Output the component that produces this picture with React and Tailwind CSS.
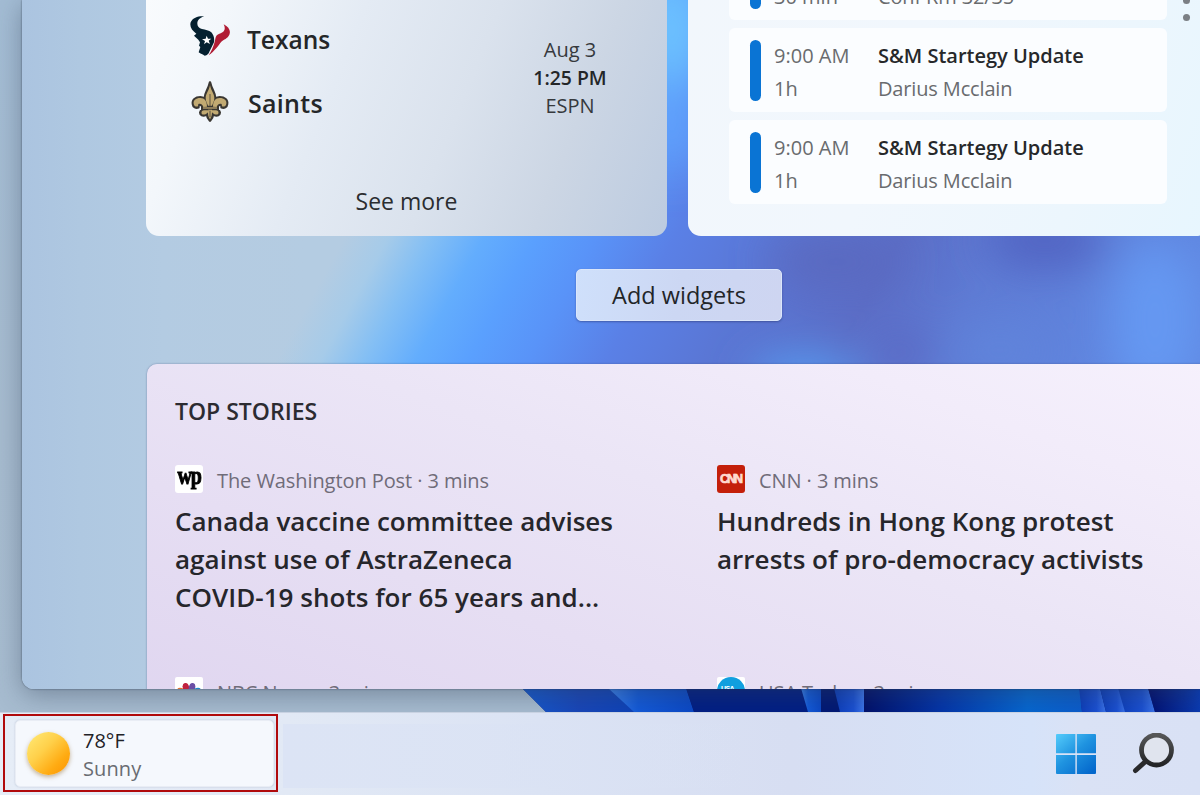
const events = [
  { time: "8:30 AM", length: "30 min", title: "Portfolio Work Update", place: "Conf Rm 32/35" },
  { time: "9:00 AM", length: "1h", title: "S&M Startegy Update", place: "Darius Mcclain" },
  { time: "9:00 AM", length: "1h", title: "S&M Startegy Update", place: "Darius Mcclain" },
];

const stories = [
  {
    source: "The Washington Post",
    logo: "wp",
    lines: ["Canada vaccine committee advises", "against use of AstraZeneca", "COVID-19 shots for 65 years and..."],
  },
  {
    source: "CNN",
    logo: "cnn",
    lines: ["Hundreds in Hong Kong protest", "arrests of pro-democracy activists"],
  },
  { source: "NBC News", logo: "nbc", lines: [] },
  { source: "USA Today", logo: "usa", lines: [] },
];

const PanelBackdrop = () => (
  <svg className="absolute inset-0 w-full h-full" viewBox="22 0 1178 689" preserveAspectRatio="none" aria-hidden="true">
    <defs>
      <linearGradient id="flow" gradientUnits="userSpaceOnUse" x1="310" y1="300" x2="977" y2="667">
        <stop offset="0" stopColor="#b4cce2" />
        <stop offset="0.05" stopColor="#a6cbe9" />
        <stop offset="0.1" stopColor="#84bff4" />
        <stop offset="0.16" stopColor="#63adfd" />
        <stop offset="0.22" stopColor="#5aa0fe" />
        <stop offset="0.29" stopColor="#5993f8" />
        <stop offset="0.38" stopColor="#5a80e6" />
        <stop offset="0.5" stopColor="#5a76d4" />
        <stop offset="0.64" stopColor="#5b6dc6" />
        <stop offset="0.76" stopColor="#5e7bd4" />
        <stop offset="1" stopColor="#6088e2" />
      </linearGradient>
      <linearGradient id="haze" x1="0" y1="0" x2="1" y2="0">
        <stop offset="0" stopColor="#abc4e0" />
        <stop offset="0.05" stopColor="#afc8e1" />
        <stop offset="0.12" stopColor="#b3cbe2" />
        <stop offset="0.24" stopColor="#b5cbe0" stopOpacity="0" />
      </linearGradient>
      <filter id="soft" x="-60%" y="-60%" width="220%" height="220%">
        <feGaussianBlur stdDeviation="22" />
      </filter>
    </defs>
    <rect x="22" width="1178" height="689" fill="url(#flow)" />
    <rect x="22" width="1178" height="689" fill="url(#haze)" />
    <g filter="url(#soft)">
      <ellipse cx="836" cy="262" rx="66" ry="28" fill="#5a69c0" />
      <ellipse cx="1045" cy="240" rx="60" ry="30" fill="#5164c2" />
      <ellipse cx="900" cy="352" rx="32" ry="22" fill="#5a69c4" />
      <ellipse cx="805" cy="376" rx="56" ry="22" fill="#569cf2" />
      <ellipse cx="1000" cy="350" rx="46" ry="22" fill="#6085dc" />
      <ellipse cx="1155" cy="320" rx="44" ry="80" fill="#6598f2" />
      <ellipse cx="672" cy="30" rx="30" ry="60" fill="#6ec6ff" />
      <ellipse cx="672" cy="130" rx="20" ry="40" fill="#62a8ff" />
    </g>
  </svg>
);

const TexansLogo = () => (
  <svg className="w-[40px] h-[40px]" viewBox="0 0 120 120">
    <path
      fill="#04202f"
      d="M43 1C28-1 8 4 2 19c-4 13 4 25 17 34l-7 6 13 12 5 8-3 10 4 4-5 16c5 4 13 6 18 10 8-2 12-6 14-12l14-28c2-12-1-22-8-30C57 43 46 41 36 39 27 36 22 30 22 23 22 12 30 5 43 1Z"
    />
    <path
      fill="#b01c34"
      d="M101 25c16 8 22 20 17 31-5 12-17 14-24 21-8 10-20 28-38 41 8-12 14-26 18-40 4-14 1-21 18-26 13-6 15-15 9-27Z"
    />
    <path fill="#fff" d="m50 59 4 9 10 0-8 6 4 10-10-5-8 6 3-10-9-5 11-2Z" />
  </svg>
);

const SaintsLogo = () => (
  <svg className="w-[38px] h-[43px]" viewBox="0 0 114 129">
    <g stroke="#3a3732" strokeWidth="8" strokeLinejoin="round" fill="#3a3732">
      <path d="M57 8c-4 20-15 30-15 45 0 10 4 15 7 23h16c3-8 7-13 7-23C72 38 61 28 57 8Z" />
      <path d="M49 78C49 62 41 52 28 52 13 52 4 61 6 72c1 9 9 13 16 10l1-7c7-3 11 2 13 8Z" />
      <path d="M65 78c0-16 8-26 21-26 15 0 24 9 22 20-1 9-9 13-16 10l-1-7c-7-3-11 2-13 8Z" />
      <path d="M34 80h46v10H34zM38 90c-8 0-12 6-9 12 5 7 13 5 19 0 1 9 4 15 9 20 5-5 8-11 9-20 6 5 14 7 19 0 3-6-1-12-9-12Z" />
    </g>
    <g fill="#c2aa72">
      <path d="M57 16c-4 18-13 26-13 38 0 10 4 15 7 23h12c3-8 7-13 7-23 0-12-9-20-13-38Z" />
      <path d="M48 80C48 64 41 54 28 54 14 54 6 62 8 71c1 8 8 10 13 8l1-7c8-3 13 3 15 9Z" />
      <path d="M66 80c0-16 7-26 20-26 14 0 22 8 20 17-1 8-8 10-13 8l-1-7c-8-3-13 3-15 9Z" />
      <path d="M36 81h42v6H36zM40 91c-7 0-10 5-8 10 4 5 11 3 18-3l2-7ZM74 91c7 0 10 5 8 10-4 5-11 3-18-3l-2-7ZM51 89h12c1 12-1 22-6 29-5-7-7-17-6-29Z" />
    </g>
    <path d="M57 42v36M36 84h42M57 92v20" stroke="#5a5040" strokeWidth="3" fill="none" />
  </svg>
);

const NbcLogo = () => (
  <svg className="w-[28px] h-[28px]" viewBox="0 0 28 28">
    <rect width="28" height="28" rx="2" fill="#fff" />
    <ellipse cx="6" cy="14" rx="4.2" ry="3.2" fill="#e2732f" transform="rotate(15 6 14)" />
    <ellipse cx="11" cy="10.5" rx="3.2" ry="4.6" fill="#c0223f" transform="rotate(-14 11 10.5)" />
    <ellipse cx="17" cy="10.5" rx="3.2" ry="4.6" fill="#6b4fa5" transform="rotate(14 17 10.5)" />
    <ellipse cx="22" cy="14" rx="4.2" ry="3.2" fill="#1c8ac8" transform="rotate(-15 22 14)" />
  </svg>
);

const StoryLogo = ({ name }) => {
  if (name === "wp") {
    return (
      <div className="flex h-[28px] w-[28px] items-center justify-center rounded-[3px] bg-white">
        <span className="-mt-[8px] scale-y-125 font-['Liberation_Serif',serif] text-[20px] leading-none font-bold tracking-[-1.2px] text-black [-webkit-text-stroke:0.8px_#000]">
          wp
        </span>
      </div>
    );
  }
  if (name === "cnn") {
    return (
      <div className="flex h-[28px] w-[28px] items-center justify-center rounded-[3px] bg-[#c41f0a]">
        <span className="pr-[1px] font-['Liberation_Sans',sans-serif] text-[12.5px] leading-none font-bold tracking-[-2px] text-[#ffd9cf] [-webkit-text-stroke:0.7px_#ffd9cf]">
          CNN
        </span>
      </div>
    );
  }
  if (name === "nbc") return <NbcLogo />;
  return (
    <div className="h-[28px] w-[28px] rounded-[2px] bg-white">
      <div className="flex h-[28px] w-[28px] rounded-full bg-[#109fdf] pt-[8px] pl-[4px]">
        <span className="font-['Liberation_Sans',sans-serif] text-[7px] leading-none font-bold tracking-[-0.6px] text-white">
          USA
        </span>
      </div>
    </div>
  );
};

const SportsCard = () => (
  <div className="flex h-[236px] w-[521px] shrink-0 flex-col rounded-b-[13px] bg-[linear-gradient(112deg,#f9fbfd_0%,#f3f7fb_14%,#e4ebf4_36%,#dae2ed_58%,#ccd6e4_78%,#bccbe0_100%)] text-[#242628]">
    <div className="flex h-[132px] pt-[4px]">
      <div className="flex flex-col pl-[44px] font-semibold">
        <div className="flex h-[64px] items-center">
          <TexansLogo />
          <span className="ml-[17px] pt-[9px] text-[24.5px]">Texans</span>
        </div>
        <div className="flex h-[64px] items-center pt-[2px]">
          <span className="ml-[1px]">
            <SaintsLogo />
          </span>
          <span className="ml-[19px] pt-[6px] text-[25px] tracking-[0.3px]">Saints</span>
        </div>
      </div>
      <div className="ml-auto w-[194px] pt-[32px] text-center text-[20px] leading-[28px] text-[#36393d]">
        <p>Aug 3</p>
        <p className="text-[19.4px] font-semibold text-[#242628]">1:25 PM</p>
        <p>ESPN</p>
      </div>
    </div>
    <button className="mt-[52px] text-[23px] leading-[34px] text-[#2b2d30]">See more</button>
  </div>
);

const CalendarCard = () => (
  <div className="flex h-[236px] w-[521px] shrink-0 items-end overflow-hidden rounded-b-[13px] bg-[linear-gradient(110deg,#f2f7fc_0%,#f1f7fd_40%,#ecf6fd_75%,#e7f6fe_100%)] pl-[41px] pb-[32px]">
    <div className="flex w-[438px] flex-col gap-[8px]">
      {events.map((event, i) => (
        <div key={i} className="flex h-[84px] items-center rounded-[6px] bg-[#fbfdff] pl-[21px] text-[20px] leading-[33px] text-[#696b6e]">
          <div className="h-[61px] w-[11px] rounded-full bg-[#0a74d4]" />
          <div className="ml-[13px] w-[104px] pt-[3px]">
            <p>{event.time}</p>
            <p>{event.length}</p>
          </div>
          <div className="pt-[3px]">
            <p className="font-semibold text-[#26282a]">{event.title}</p>
            <p className="tracking-[-0.15px]">{event.place}</p>
          </div>
        </div>
      ))}
    </div>
    <div className="mb-[183px] ml-[16px] flex flex-col gap-[10px]">
      <span className="h-[7px] w-[7px] rounded-full bg-[#7b7f84]" />
      <span className="h-[7px] w-[7px] rounded-full bg-[#7b7f84]" />
    </div>
  </div>
);

const Story = ({ source, logo, lines }) => (
  <article className="h-[212px] w-[542px]">
    <div className="flex h-[28px] items-center gap-[14px]">
      <StoryLogo name={logo} />
      <span className="pt-[3px] text-[20px] tracking-[-0.08px] text-[#706c79]">{source} · 3 mins</span>
    </div>
    <h3 className="mt-[9px] text-[26px] leading-[38px] font-semibold tracking-[0.03px] text-[#26262b]">
      {lines.map((line) => (
        <span key={line} className="block whitespace-nowrap">
          {line}
        </span>
      ))}
    </h3>
  </article>
);

const Bloom = () => (
  <svg className="block h-[24px] w-[700px]" viewBox="500 688 700 24" preserveAspectRatio="none" aria-hidden="true">
    <defs>
      <linearGradient id="petal" x1="0" y1="0" x2="1" y2="0">
        <stop offset="0" stopColor="#00106a" />
        <stop offset="0.35" stopColor="#0334a8" />
        <stop offset="0.75" stopColor="#0566d0" />
        <stop offset="1" stopColor="#0a5ccc" />
      </linearGradient>
      <linearGradient id="petalEnd" x1="0" y1="0" x2="1" y2="0">
        <stop offset="0" stopColor="#000e70" />
        <stop offset="1" stopColor="#0a3ab0" />
      </linearGradient>
      <linearGradient id="petalStart" x1="0" y1="0" x2="1" y2="0">
        <stop offset="0" stopColor="#1458cc" />
        <stop offset="0.5" stopColor="#1846b8" />
        <stop offset="1" stopColor="#0c42b8" />
      </linearGradient>
      <linearGradient id="fold" x1="0" y1="0" x2="1" y2="0">
        <stop offset="0" stopColor="#3a80ea" />
        <stop offset="0.35" stopColor="#1259d8" />
        <stop offset="1" stopColor="#0a48c6" />
      </linearGradient>
      <linearGradient id="foldBack" x1="1" y1="0" x2="0" y2="0">
        <stop offset="0" stopColor="#3b74ea" />
        <stop offset="0.35" stopColor="#1a50d2" />
        <stop offset="1" stopColor="#0b3cb8" />
      </linearGradient>
    </defs>
    <path d="M522 688 546 712H1200V688Z" fill="#011f86" />
    <path d="M522 688 546 712H636L610 688Z" fill="url(#petalStart)" />
    <path d="M608 688 634 712H694L686 688Z" fill="url(#fold)" />
    <path d="M686 688 694 712H808L802 688Z" fill="#011e84" />
    <path d="M801 688 808 712H821V688Z" fill="url(#fold)" />
    <path d="M821 688V712H864V688Z" fill="#011874" />
    <path d="M834 688 840 712H864V688Z" fill="url(#foldBack)" />
    <path d="M864 688H1080L1082 712H864Z" fill="url(#petal)" />
    <path d="M1079 688 1082 712H1106L1100 688Z" fill="url(#foldBack)" />
    <path d="M1100 688 1106 712H1126L1119 688Z" fill="url(#foldBack)" />
    <path d="M1118 688 1125 712H1155L1148 688Z" fill="url(#foldBack)" />
    <path d="M1148 688 1155 712H1200V688Z" fill="url(#petalEnd)" />
  </svg>
);

const Taskbar = () => (
  <div className="flex h-[83px] bg-[linear-gradient(90deg,#e6edf7_0%,#e2e9f5_24%,#dbe3f4_45%,#d7def2_66%,#d6e3f9_86%,#dae2f5_90%,#d9e1f5_100%)] border-t border-[#c9d2e2]">
    <div className="mt-[1px] ml-[3px] flex h-[78px] w-[275px] shrink-0 border-2 border-[#b00a0c] pt-[4px] pl-[10px]">
      <div className="flex h-[67px] w-[259px] items-center rounded-[5px] border border-[#e9edf5] bg-[#f5f8fd] shadow-[0_0_2px_rgba(110,125,160,0.35)]">
        <div className="ml-[11px] h-[43px] w-[43px] rounded-full bg-[linear-gradient(135deg,#ffe873_5%,#ffd04a_40%,#ffab12_72%,#fb9200_100%)] shadow-[0_2px_4px_rgba(150,110,50,0.5)]" />
        <div className="ml-[13px] pt-[2px] text-[20px] leading-[28px]">
          <p className="text-[#1f2227]">78°F</p>
          <p className="tracking-[0.1px] text-[#696c72]">Sunny</p>
        </div>
      </div>
    </div>
    <div className="mt-[11px] ml-[5px] h-[64px] grow bg-[linear-gradient(90deg,#dce4f5_0%,rgba(218,226,244,0.6)_40%,rgba(216,224,243,0)_60%)]" />
    <div className="flex shrink-0 pt-[20px] pr-[26px]">
      <svg className="mt-[1px] h-[40px] w-[40px]" viewBox="0 0 40 40">
        <defs>
          <linearGradient id="win" gradientUnits="userSpaceOnUse" x1="0" y1="0" x2="34" y2="40">
            <stop offset="0" stopColor="#55ccfb" />
            <stop offset="0.5" stopColor="#1f93e0" />
            <stop offset="1" stopColor="#0468cc" />
          </linearGradient>
        </defs>
        <path fill="url(#win)" d="M1 0h18.4v19.3H0V1a1 1 0 0 1 1-1ZM20.8 0H39a1 1 0 0 1 1 1v18.3H20.8ZM0 21h19.4v19H1a1 1 0 0 1-1-1ZM20.8 21H40v18a1 1 0 0 1-1 1H20.8Z" />
      </svg>
      <svg className="ml-[36px] h-[42px] w-[42px]" viewBox="0 0 42 42">
        <defs>
          <linearGradient id="lens" x1="0" y1="0" x2="0" y2="1">
            <stop offset="0" stopColor="#555657" />
            <stop offset="1" stopColor="#232426" />
          </linearGradient>
        </defs>
        <circle cx="24.5" cy="17" r="15" fill="#e0e4ee" stroke="url(#lens)" strokeWidth="4.8" />
        <path d="M13.5 28.5 3.5 37.5" stroke="#29292b" strokeWidth="5" strokeLinecap="round" />
      </svg>
    </div>
  </div>
);

export default function App() {
  return (
    <div className="flex h-[795px] w-[1200px] flex-col overflow-hidden bg-[#a3b9cf] font-['Open_Sans',sans-serif]">
      <div className="relative h-[712px] shrink-0 overflow-hidden bg-[linear-gradient(180deg,#a3bcd4_0%,#a6bbcf_60%,#a7bcd0_100%)]">
        <div className="absolute right-0 bottom-0">
          <Bloom />
        </div>
        <main className="relative ml-[22px] h-[689px] rounded-bl-[12px] shadow-[0_6px_26px_rgba(50,65,85,0.42),0_0_2px_rgba(40,55,75,0.8)]">
          <div className="relative h-full overflow-hidden rounded-bl-[12px]">
            <PanelBackdrop />
            <div className="relative flex flex-col pl-[124px]">
              <div className="flex gap-[21px]">
                <SportsCard />
                <CalendarCard />
              </div>
              <button className="mt-[33px] ml-[430px] h-[52px] w-[206px] rounded-[5px] border border-[#dbe6fa] bg-[linear-gradient(100deg,#cfe0fb_0%,#ccd7f3_50%,#ced5f1_100%)] pt-[2px] text-[23.5px] text-[#222529] shadow-[0_1px_2px_rgba(40,50,110,0.5)]">
                Add widgets
              </button>
              <section className="mt-[43px] ml-[1px] h-[340px] w-[1100px] rounded-tl-[10px] bg-[linear-gradient(20deg,#e0d6f0_0%,#e6def3_30%,#ebe5f6_55%,#f2ecfa_80%,#f6f1fd_100%)] pl-[28px] shadow-[0_0_2px_rgba(60,70,120,0.6)]">
                <h2 className="pt-[29px] text-[23px] leading-[36px] font-semibold text-[#2c2b31]">TOP STORIES</h2>
                <div className="mt-[36px] flex w-[1084px] flex-wrap">
                  {stories.map((story) => (
                    <Story key={story.source} {...story} />
                  ))}
                </div>
              </section>
            </div>
          </div>
        </main>
      </div>
      <Taskbar />
    </div>
  );
}
